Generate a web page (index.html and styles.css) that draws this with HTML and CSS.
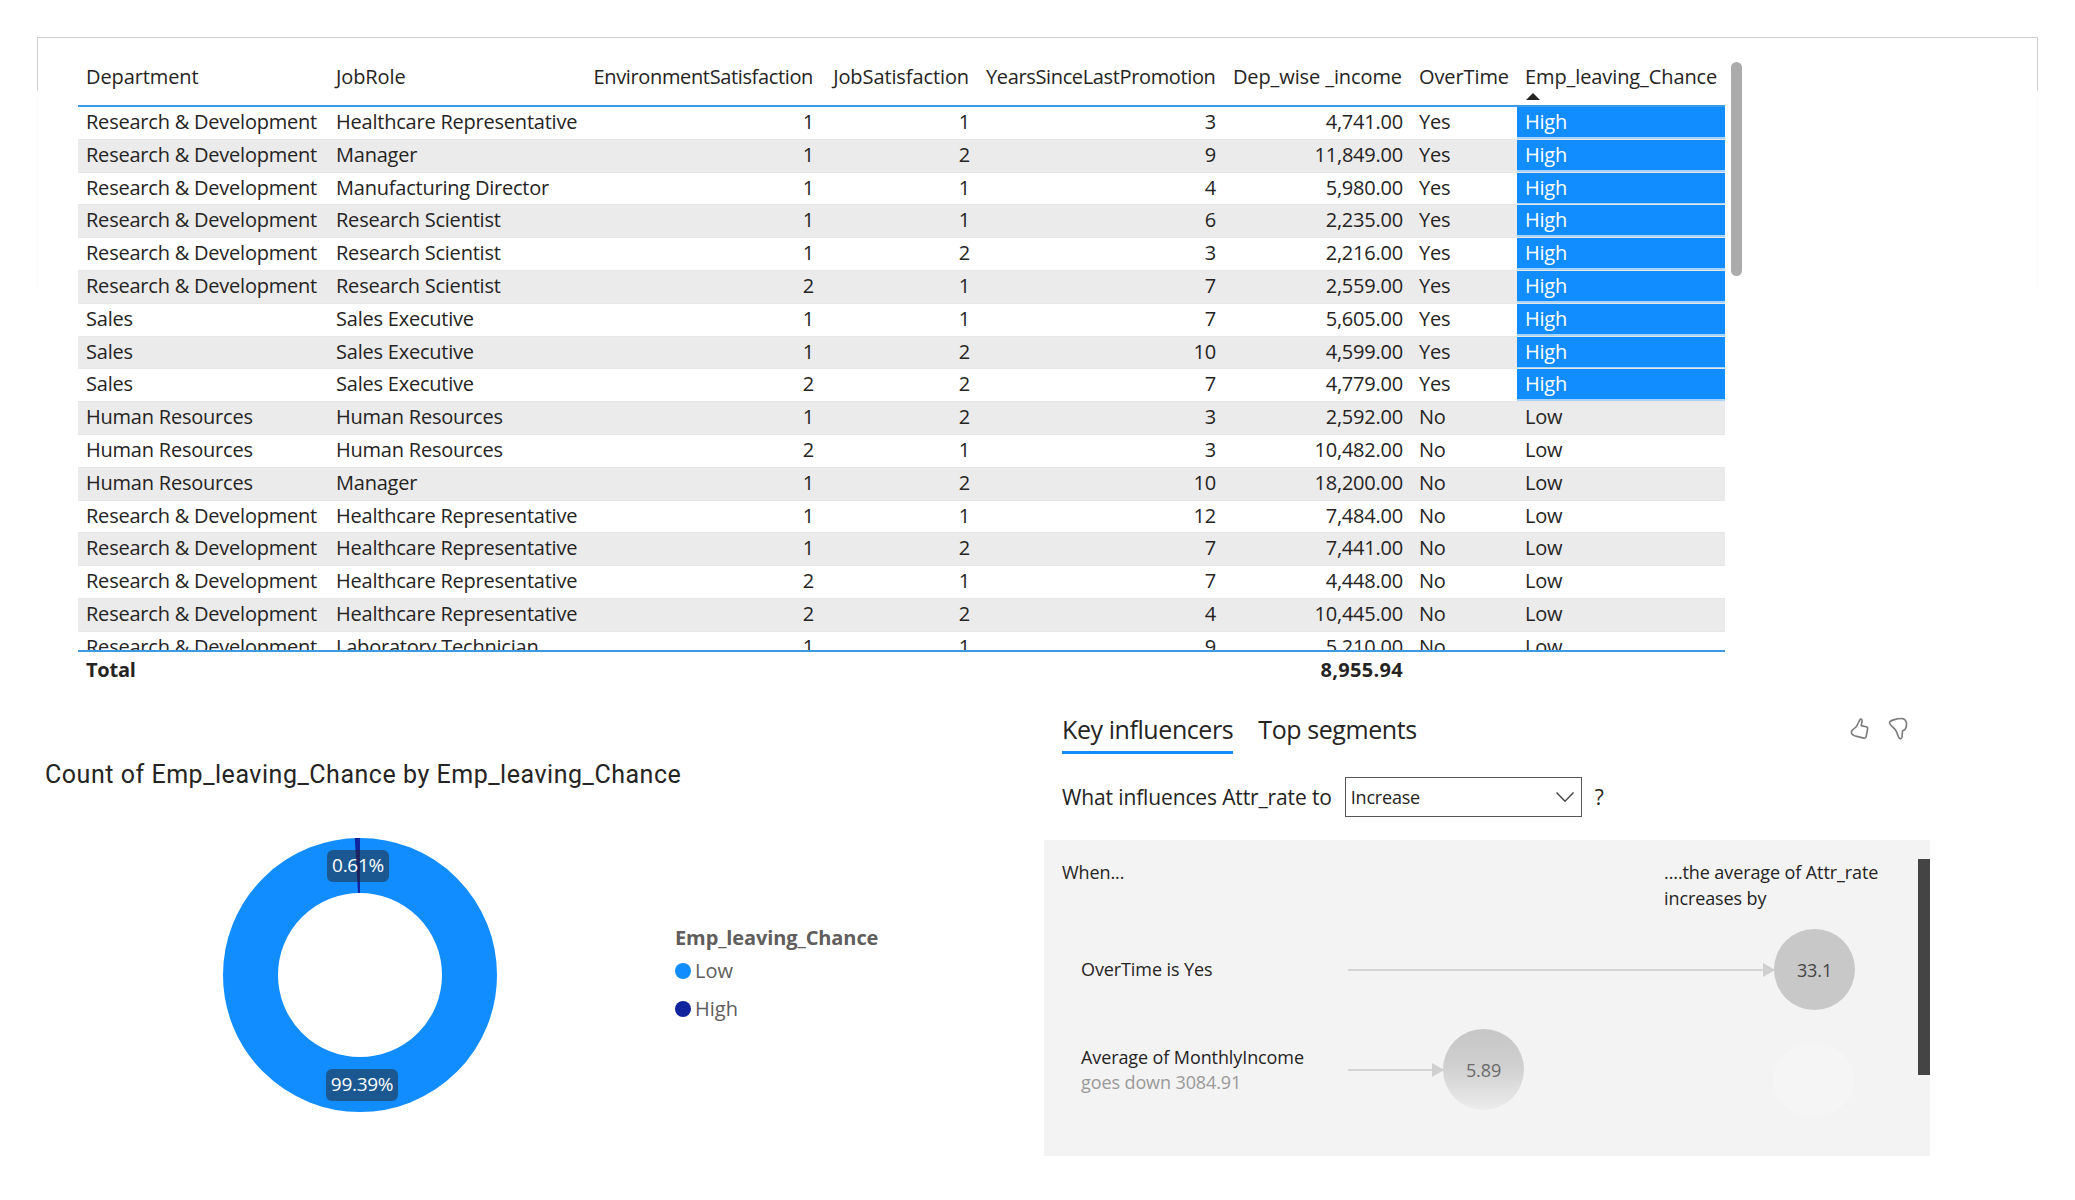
FILE: index.html
```html
<!DOCTYPE html>
<html lang="en">
<head>
<meta charset="utf-8">
<title>Employee attrition report</title>
<link rel="stylesheet" href="styles.css">
</head>
<body>
<main class="page">
  <section class="matrix">
    <div class="row head">
      <div class="cell">Department</div><div class="cell">JobRole</div><div class="cell num tight">EnvironmentSatisfaction</div><div class="cell num">JobSatisfaction</div><div class="cell num tight">YearsSinceLastPromotion</div><div class="cell num">Dep_wise _income</div><div class="cell">OverTime</div><div class="cell sorted">Emp_leaving_Chance</div>
    </div>
    <div class="rows">
      <div class="row"><div class="cell">Research &amp; Development</div><div class="cell">Healthcare Representative</div><div class="cell num">1</div><div class="cell num">1</div><div class="cell num">3</div><div class="cell num">4,741.00</div><div class="cell">Yes</div><div class="cell high">High</div></div>
      <div class="row"><div class="cell">Research &amp; Development</div><div class="cell">Manager</div><div class="cell num">1</div><div class="cell num">2</div><div class="cell num">9</div><div class="cell num">11,849.00</div><div class="cell">Yes</div><div class="cell high">High</div></div>
      <div class="row"><div class="cell">Research &amp; Development</div><div class="cell">Manufacturing Director</div><div class="cell num">1</div><div class="cell num">1</div><div class="cell num">4</div><div class="cell num">5,980.00</div><div class="cell">Yes</div><div class="cell high">High</div></div>
      <div class="row"><div class="cell">Research &amp; Development</div><div class="cell">Research Scientist</div><div class="cell num">1</div><div class="cell num">1</div><div class="cell num">6</div><div class="cell num">2,235.00</div><div class="cell">Yes</div><div class="cell high">High</div></div>
      <div class="row"><div class="cell">Research &amp; Development</div><div class="cell">Research Scientist</div><div class="cell num">1</div><div class="cell num">2</div><div class="cell num">3</div><div class="cell num">2,216.00</div><div class="cell">Yes</div><div class="cell high">High</div></div>
      <div class="row"><div class="cell">Research &amp; Development</div><div class="cell">Research Scientist</div><div class="cell num">2</div><div class="cell num">1</div><div class="cell num">7</div><div class="cell num">2,559.00</div><div class="cell">Yes</div><div class="cell high">High</div></div>
      <div class="row"><div class="cell">Sales</div><div class="cell">Sales Executive</div><div class="cell num">1</div><div class="cell num">1</div><div class="cell num">7</div><div class="cell num">5,605.00</div><div class="cell">Yes</div><div class="cell high">High</div></div>
      <div class="row"><div class="cell">Sales</div><div class="cell">Sales Executive</div><div class="cell num">1</div><div class="cell num">2</div><div class="cell num">10</div><div class="cell num">4,599.00</div><div class="cell">Yes</div><div class="cell high">High</div></div>
      <div class="row"><div class="cell">Sales</div><div class="cell">Sales Executive</div><div class="cell num">2</div><div class="cell num">2</div><div class="cell num">7</div><div class="cell num">4,779.00</div><div class="cell">Yes</div><div class="cell high">High</div></div>
      <div class="row"><div class="cell">Human Resources</div><div class="cell">Human Resources</div><div class="cell num">1</div><div class="cell num">2</div><div class="cell num">3</div><div class="cell num">2,592.00</div><div class="cell">No</div><div class="cell">Low</div></div>
      <div class="row"><div class="cell">Human Resources</div><div class="cell">Human Resources</div><div class="cell num">2</div><div class="cell num">1</div><div class="cell num">3</div><div class="cell num">10,482.00</div><div class="cell">No</div><div class="cell">Low</div></div>
      <div class="row"><div class="cell">Human Resources</div><div class="cell">Manager</div><div class="cell num">1</div><div class="cell num">2</div><div class="cell num">10</div><div class="cell num">18,200.00</div><div class="cell">No</div><div class="cell">Low</div></div>
      <div class="row"><div class="cell">Research &amp; Development</div><div class="cell">Healthcare Representative</div><div class="cell num">1</div><div class="cell num">1</div><div class="cell num">12</div><div class="cell num">7,484.00</div><div class="cell">No</div><div class="cell">Low</div></div>
      <div class="row"><div class="cell">Research &amp; Development</div><div class="cell">Healthcare Representative</div><div class="cell num">1</div><div class="cell num">2</div><div class="cell num">7</div><div class="cell num">7,441.00</div><div class="cell">No</div><div class="cell">Low</div></div>
      <div class="row"><div class="cell">Research &amp; Development</div><div class="cell">Healthcare Representative</div><div class="cell num">2</div><div class="cell num">1</div><div class="cell num">7</div><div class="cell num">4,448.00</div><div class="cell">No</div><div class="cell">Low</div></div>
      <div class="row"><div class="cell">Research &amp; Development</div><div class="cell">Healthcare Representative</div><div class="cell num">2</div><div class="cell num">2</div><div class="cell num">4</div><div class="cell num">10,445.00</div><div class="cell">No</div><div class="cell">Low</div></div>
      <div class="row"><div class="cell">Research &amp; Development</div><div class="cell">Laboratory Technician</div><div class="cell num">1</div><div class="cell num">1</div><div class="cell num">9</div><div class="cell num">5,210.00</div><div class="cell">No</div><div class="cell">Low</div></div>
    </div>
    <div class="row total">
      <div class="cell">Total</div><div class="cell"></div><div class="cell"></div><div class="cell"></div><div class="cell"></div><div class="cell num">8,955.94</div><div class="cell"></div><div class="cell"></div>
    </div>
    <div class="scrollbar"></div>
  </section>

  <section class="lower">
    <div class="donut-visual">
      <h2 class="donut-title">Count of Emp_leaving_Chance by Emp_leaving_Chance</h2>
      <div class="donut-body">
        <svg class="donut" width="300" height="290" viewBox="0 0 300 290" role="img" aria-label="Donut chart">
          <circle cx="150" cy="145" r="109.5" fill="none" stroke="#118dff" stroke-width="55"/>
          <path d="M144.8 8.100 L150 8 L150 63 L148 63 Z" fill="#12239e"/>
          <rect x="117" y="20" width="62" height="32" rx="6" fill="#252423" fill-opacity=".5"/>
          <text x="148" y="42" class="tag-text">0.61%</text>
          <rect x="116" y="239" width="72" height="32" rx="6" fill="#252423" fill-opacity=".5"/>
          <text x="152" y="261" class="tag-text">99.39%</text>
        </svg>
        <div class="legend">
          <div class="legend-title">Emp_leaving_Chance</div>
          <div class="legend-item"><span class="dot dot-low"></span>Low</div>
          <div class="legend-item"><span class="dot dot-high"></span>High</div>
        </div>
      </div>
    </div>

    <div class="influencers">
      <div class="tabbar">
        <div class="tab active">Key influencers</div>
        <div class="tab">Top segments</div>
        <div class="feedback">
          <svg width="20" height="24" viewBox="0 0 20 24" fill="none" stroke="#7a7a7a" stroke-width="1.6" stroke-linejoin="round" stroke-linecap="round"><path d="M10.500 2c1.600 0 1.800 1.600 1.500 3l-.8 3.600 5 1.100c1.200.3 1.600 1.200 1.400 2.200l-1.400 7.600c-.3 1.300-1.200 1.900-2.400 1.600l-7-1.700C4.500 19 2 17.500 1.500 16c-.4-1.400.2-2.500 1.500-3.500l3-2.500C7.500 8 9 4 10.500 2Z"/></svg>
          <svg width="20" height="24" viewBox="0 0 20 24" fill="none" stroke="#7a7a7a" stroke-width="1.6" stroke-linejoin="round" stroke-linecap="round"><path d="M2 4.500C3 3.500 9 1.500 13 1.500c3 0 5 1.500 5.500 4.500.3 2.500-.3 5-1.500 6.500l-2.500 1.500-.5 6c-.2 1.800-2 2.300-3 .8-.9-1.500-1.800-5.300-3.500-7.800C6 11 2.500 8.500 1.700 6.500c-.2-.8-.1-1.500.3-2Z"/></svg>
        </div>
      </div>
      <div class="question">
        <span>What influences Attr_rate to</span>
        <div class="select">
          <span>Increase</span>
          <svg width="18" height="10" viewBox="0 0 18 10" fill="none" stroke="#444" stroke-width="1.4"><path d="M.5.5 9 9.200 17.500.5"/></svg>
        </div>
        <span>?</span>
      </div>
      <div class="panel">
        <div class="panel-head">
          <div>When...</div>
          <div class="panel-result">....the average of Attr_rate<br>increases by</div>
        </div>
        <div class="inf-row first">
          <div class="inf-label">OverTime is Yes</div>
          <div class="conn conn-long"></div>
          <div class="bubble">33.1</div>
        </div>
        <div class="inf-row second">
          <div class="inf-label">Average of MonthlyIncome<small>goes down 3084.91</small></div>
          <div class="conn conn-short"></div>
          <div class="bubble fading">5.89</div>
        </div>
        <div class="ghost"></div>
        <div class="panel-scroll"></div>
      </div>
    </div>
  </section>
</main>
</body>
</html>
```

FILE: styles.css
```css
* { box-sizing: border-box; }
html, body { margin: 0; background: #fff; }
body {
  width: 2075px;
  height: 1200px;
  overflow: hidden;
  font-family: "Open Sans", "Noto Sans", "Liberation Sans", sans-serif;
  color: #252423;
}
.page { padding-top: 37px; }

/* matrix */
.matrix {
  position: relative;
  margin: 0 37px;
  height: 655px;
  padding: 22px 0 0 41px;
  border-top: 1px solid #cfcfcf;
}
.matrix::before, .matrix::after {
  content: "";
  position: absolute;
  top: 0;
  width: 1px;
  height: 253px;
  background: linear-gradient(#cfcfcf 0, #cfcfcf 52px, #fbfbfb 53px, #fbfbfb 100%);
}
.matrix::before { left: 0; }
.matrix::after { right: 0; }

.row {
  display: grid;
  grid-template-columns: 250px 256px 238px 156px 246px 187px 106px 208px;
  width: 1647px;
  height: 32.8px;
  font-size: 20px;
  line-height: 30px;
  letter-spacing: -.22px;
}
.cell {
  padding: 0 8px;
  white-space: nowrap;
  overflow: visible;
}
.num { text-align: right; }
.head { height: 45px; line-height: 33px; letter-spacing: -.1px; }
.head .num { padding-right: 9px; }
.head .tight { letter-spacing: -.36px; }
.sorted { position: relative; }
.sorted::after {
  content: "";
  position: absolute;
  left: 9px;
  top: 33px;
  border-left: 7px solid transparent;
  border-right: 7px solid transparent;
  border-bottom: 7px solid #252423;
}
.rows {
  height: 547px;
  overflow: hidden;
  border-top: 2px solid #3a9ae2;
  border-bottom: 2px solid #3a9ae2;
  width: 1647px;
}
.rows .row:nth-child(even) { background: #ebebeb; }
.rows .row { border-bottom: 1px solid #e6e6e6; overflow: hidden; }
.high {
  background: #118dff;
  color: #fff;
  border-bottom: 2px solid #a6d4ff;
}
.total { font-weight: 700; height: 30px; line-height: 35px; }
.total .num { letter-spacing: .3px; }
.scrollbar {
  position: absolute;
  left: 1694px;
  top: 24px;
  width: 11px;
  height: 214px;
  border-radius: 6px;
  background: #ababab;
}

/* lower */
.lower { display: flex; margin-top: 18px; }
.donut-visual { width: 1018px; padding: 50px 0 0 45px; }
.donut-title {
  margin: 0;
  font-family: Roboto, "Liberation Sans", sans-serif;
  font-weight: 400;
  font-size: 25px;
  line-height: 30px;
  letter-spacing: .53px;
}
.donut-body { display: flex; align-items: center; padding-top: 40px; }
.donut { display: block; flex: none; margin-left: 165px; }
.tag-text {
  fill: #fff;
  font-size: 19px;
  letter-spacing: -.3px;
  text-anchor: middle;
}
.legend { margin-left: 165px; padding-top: 2px; color: #605e5c; font-size: 20px; }
.legend-title { font-weight: 700; line-height: 26px; margin-bottom: 1px; letter-spacing: -.1px; }
.legend-item { display: flex; align-items: center; height: 38px; gap: 4px; }
.dot { width: 16px; height: 16px; border-radius: 50%; }
.dot-low { background: #118dff; }
.dot-high { background: #12239e; }

/* influencers */
.influencers { width: 886px; margin-left: 26px; }
.tabbar { display: flex; align-items: flex-start; padding: 0 0 0 18px; height: 67px; gap: 25px; }
.tab { font-size: 25px; line-height: 38px; height: 44px; letter-spacing: -.42px; }
.tab.active { border-bottom: 3px solid #118dff; font-weight: 500; }
.feedback { display: flex; gap: 18px; margin-left: auto; margin-right: 22px; padding-top: 7px; }
.question {
  display: flex;
  align-items: center;
  height: 40px;
  padding-left: 18px;
  gap: 13px;
  font-size: 21px;
  letter-spacing: -.13px;
}
.select {
  width: 237px;
  height: 40px;
  border: 1.5px solid #555;
  display: flex;
  align-items: center;
  justify-content: space-between;
  padding: 0 7px 0 5px;
  font-size: 18px;
  letter-spacing: -.2px;
}
.panel {
  position: relative;
  height: 316px;
  margin-top: 23px;
  padding: 20px 0 0 18px;
  background: #f3f3f3;
  font-size: 18px;
  letter-spacing: -.1px;
}
.panel-head { display: flex; justify-content: space-between; line-height: 25.5px; height: 64px; padding-right: 36px; }
.panel-result { width: 230px; }
.inf-row { display: flex; align-items: center; height: 81px; padding-left: 19px; }
.inf-row.first { margin-top: 5px; }
.inf-row.second { margin-top: 19px; }
.inf-label { width: 267px; flex: none; line-height: 25px; }
.inf-label small { display: block; font-size: inherit; color: #999; }
.conn { position: relative; height: 2px; background: #d4d4d4; flex: none; }
.conn::after {
  content: "";
  position: absolute;
  right: -1px;
  top: -6px;
  border-top: 7px solid transparent;
  border-bottom: 7px solid transparent;
  border-left: 12px solid #cfcfcf;
}
.conn-long { width: 426px; }
.conn-short { width: 95px; }
.bubble {
  width: 81px;
  height: 81px;
  flex: none;
  border-radius: 50%;
  background: #c8c8c8;
  display: flex;
  align-items: center;
  justify-content: center;
  color: #444;
}
.bubble.fading { background: linear-gradient(#c6c6c6 0, #cfcfcf 45%, #ececec 100%); color: #6a6a6a; }
.ghost {
  position: absolute;
  left: 729px;
  top: 203px;
  width: 81px;
  height: 74px;
  border-radius: 50%;
  background: #f5f5f5;
}
.panel-scroll {
  position: absolute;
  right: 0;
  top: 19px;
  width: 12px;
  height: 216px;
  background: #444;
}
```
